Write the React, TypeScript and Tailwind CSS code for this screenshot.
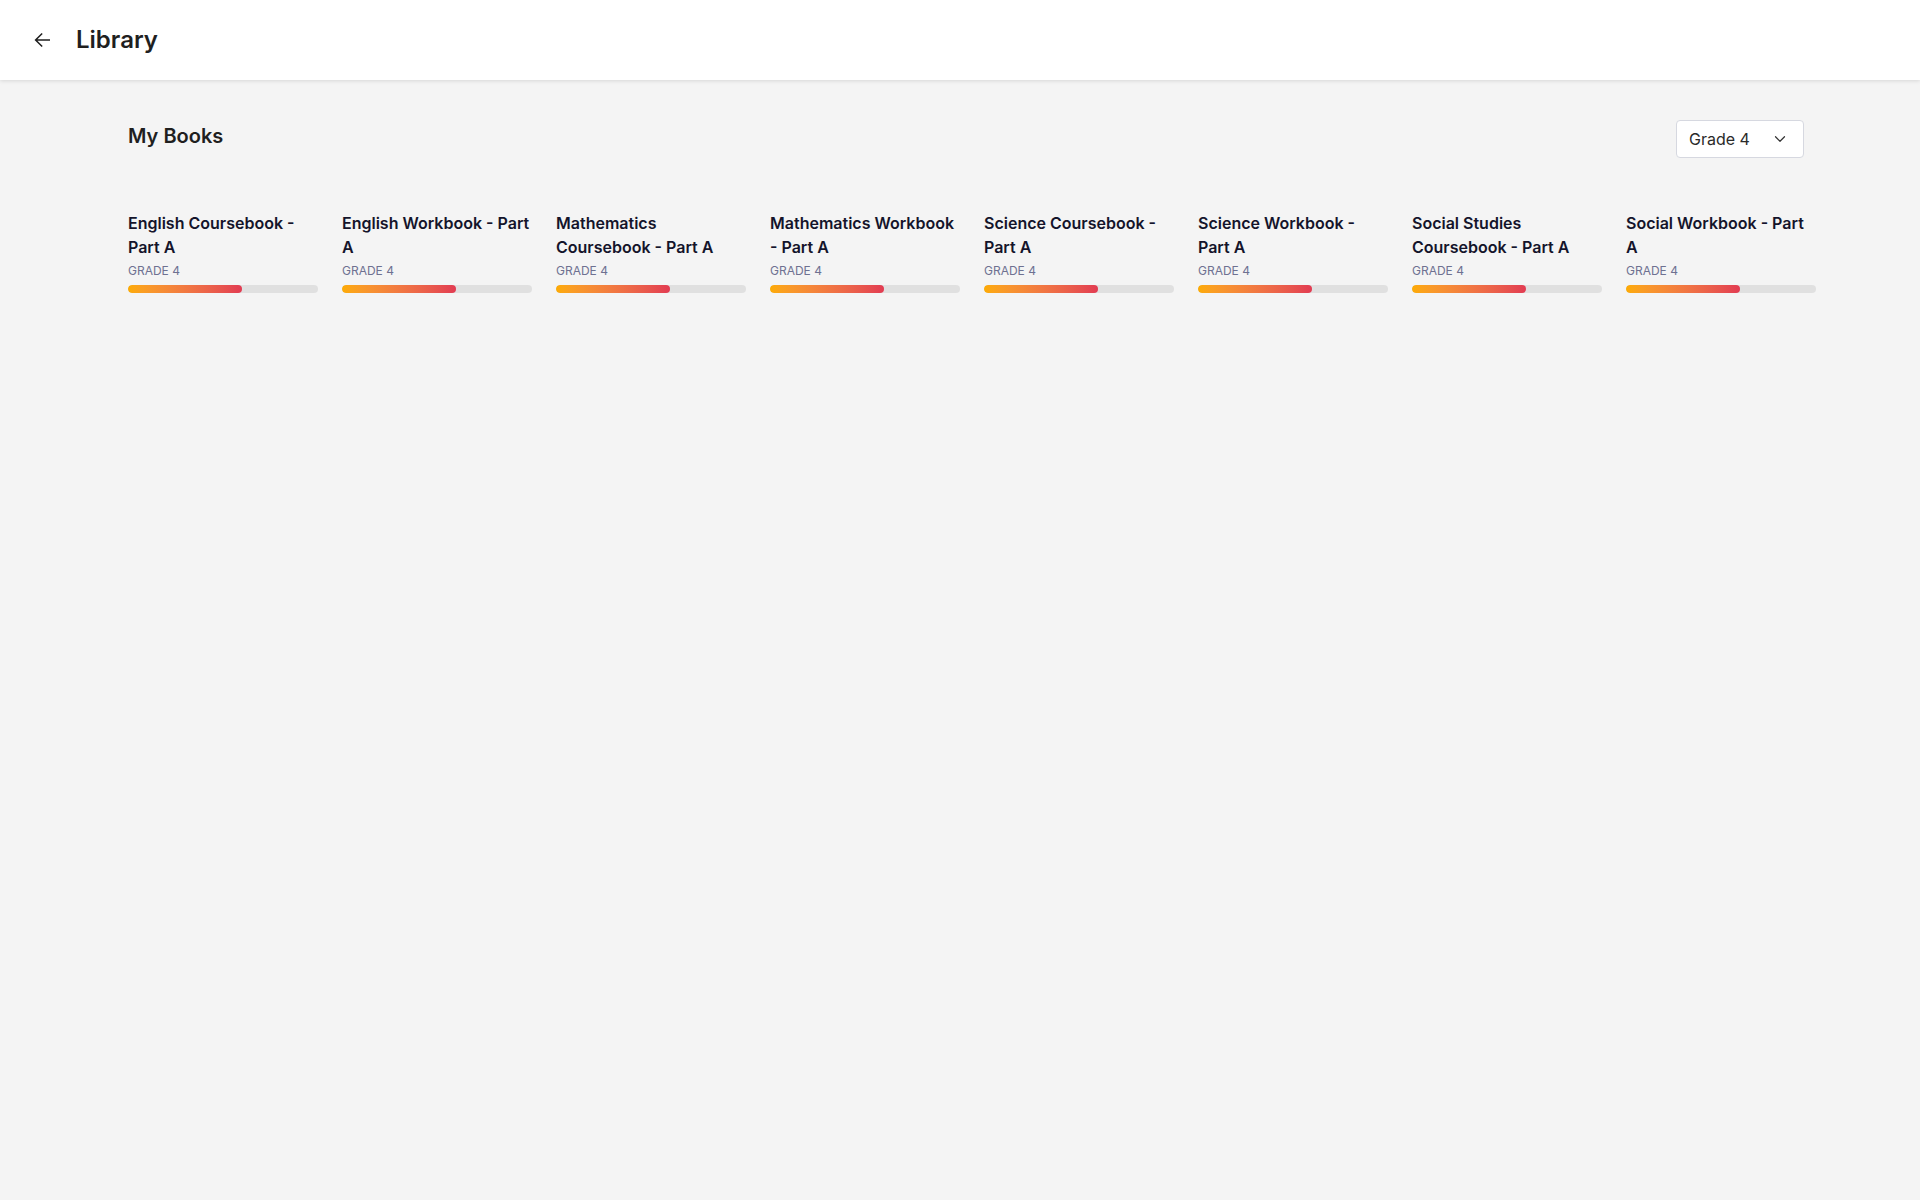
import React from 'react';
import { ChevronDown } from 'lucide-react';

const books = [
  'English Coursebook - Part A',
  'English Workbook - Part A',
  'Mathematics Coursebook - Part A',
  'Mathematics Workbook - Part A',
  'Science Coursebook - Part A',
  'Science Workbook - Part A',
  'Social Studies Coursebook - Part A',
  'Social Workbook - Part A',
];

function BackArrow() {
  return (
    <svg width="24" height="24" viewBox="0 0 24 24" fill="currentColor">
      <path d="M20 11.25H7.4l5.3-5.3-1.06-1.06L4.53 12l7.11 7.11 1.06-1.06-5.3-5.3H20v-1.5z" />
    </svg>
  );
}

function BookCard({ title, progress }: { title: string; progress: number }) {
  return (
    <div className="w-[190px] shrink-0">
      <h3 className="text-[16px] font-semibold leading-6 text-[#14142b]">{title}</h3>
      <div className="mt-[4px] text-[12px] leading-4 uppercase text-[#6e7191]">Grade 4</div>
      <div className="mt-[6px] h-2 w-full overflow-hidden rounded-full bg-[#e0e0e0]">
        <div
          className="h-full rounded-full bg-gradient-to-r from-[#fdab00] to-[#e23b52]"
          style={{ width: `${progress}%` }}
        />
      </div>
    </div>
  );
}

export default function App() {
  return (
    <div className="min-h-screen bg-[#f4f4f4] font-['Inter',sans-serif]">
      <header className="flex h-20 items-center bg-white pl-[30px] shadow-[0_1px_4px_rgba(0,0,0,0.12)]">
        <button className="text-[#1f1f1f]">
          <BackArrow />
        </button>
        <h1 className="ml-[22px] text-[24px] font-semibold text-[#1f1f1f]">Library</h1>
      </header>

      <main className="pl-[128px] pr-[116px] pt-10">
        <div className="flex items-start justify-between">
          <h2 className="mt-[2px] text-[20px] font-semibold leading-7 text-[#1f1f1f]">My Books</h2>
          <button className="flex h-[38px] w-[128px] items-center justify-between rounded border border-[#d6d8e0] bg-white pl-3 pr-[14px] text-[16px] text-[#2a2a2a]">
            <span>Grade 4</span>
            <ChevronDown size={18} strokeWidth={1.6} className="text-[#333]" />
          </button>
        </div>

        <div className="mt-[53px] flex gap-6">
          {books.map((b) => (
            <BookCard key={b} title={b} progress={60} />
          ))}
        </div>
      </main>
    </div>
  );
}
